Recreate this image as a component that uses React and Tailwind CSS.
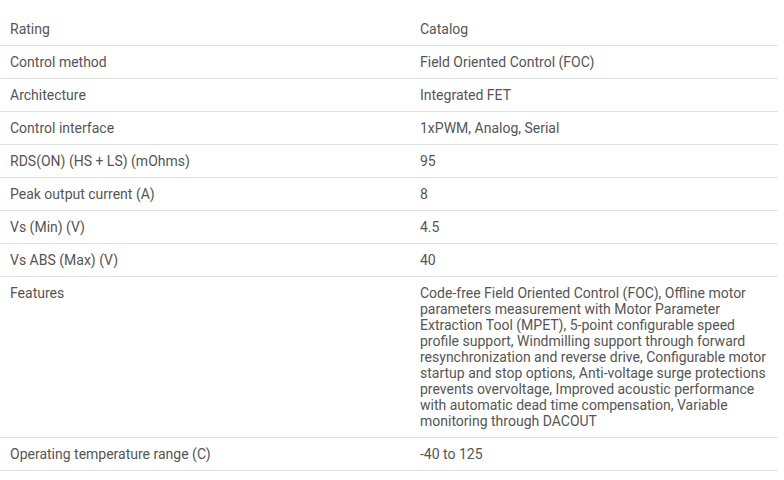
const ROWS = [
  ['Rating', 'Catalog'],
  ['Control method', 'Field Oriented Control (FOC)'],
  ['Architecture', 'Integrated FET'],
  ['Control interface', '1xPWM, Analog, Serial'],
  ['RDS(ON) (HS + LS) (mOhms)', '95'],
  ['Peak output current (A)', '8'],
  ['Vs (Min) (V)', '4.5'],
  ['Vs ABS (Max) (V)', '40'],
  [
    'Features',
    'Code-free Field Oriented Control (FOC), Offline motor parameters measurement with Motor Parameter Extraction Tool (MPET), 5-point configurable speed profile support, Windmilling support through forward resynchronization and reverse drive, Configurable motor startup and stop options, Anti-voltage surge protections prevents overvoltage, Improved acoustic performance with automatic dead time compensation, Variable monitoring through DACOUT',
  ],
  ['Operating temperature range (C)', '-40 to 125'],
]

export default function App() {
  return (
    <div className="min-h-screen bg-white pt-[13px]" style={{ fontFamily: 'Roboto, "Liberation Sans", sans-serif' }}>
      <div className="w-[778px] text-[14px] leading-4 text-[#555555]">
        {ROWS.map(([label, value]) => (
          <div key={label} className="flex border-b border-[#e2e2e2]">
            <div className="w-[410px] shrink-0 py-2 pl-[10px] pr-4">{label}</div>
            <div className="flex-1 py-2 pl-[10px] pr-[8px]">{value}</div>
          </div>
        ))}
      </div>
    </div>
  )
}
